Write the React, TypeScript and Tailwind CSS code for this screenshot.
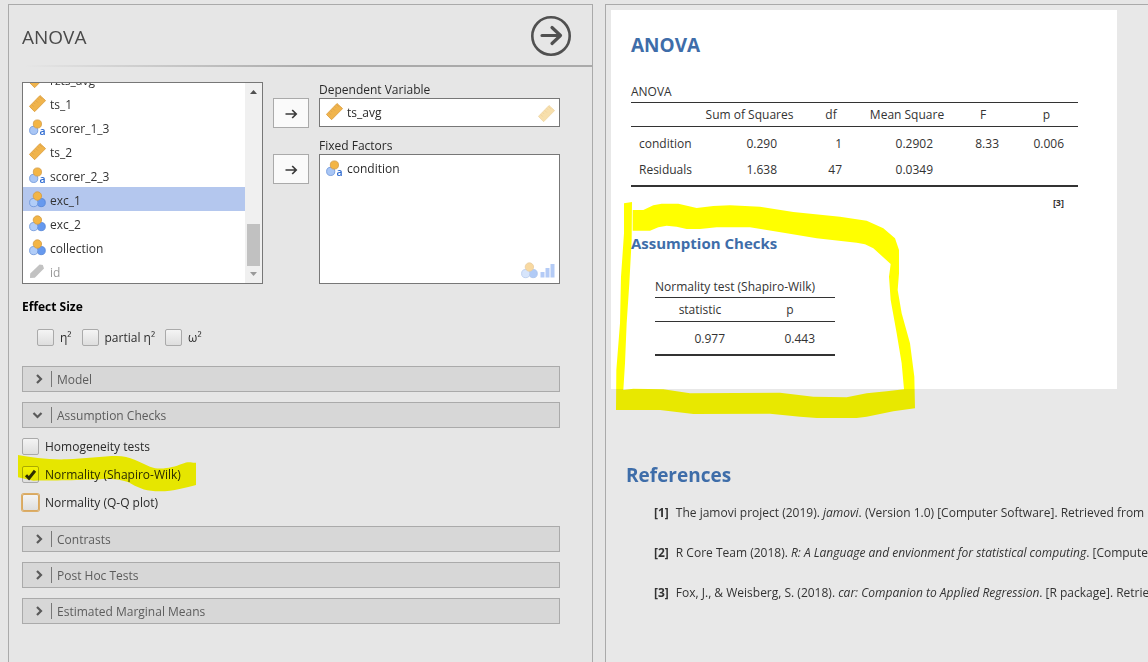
import { useId, useState } from 'react';
import type { ReactNode } from 'react';

type VarKind = 'continuous' | 'nominal' | 'nominalText' | 'id';

function RulerIcon({ muted = false }: { muted?: boolean }) {
  return (
    <svg viewBox="0 0 17 17" className="size-[17px] shrink-0" aria-hidden="true">
      <path
        d="M0.4 11.4 L11 0.5 L16.6 5.6 L5.6 16.7 Z"
        fill={muted ? '#f7dfac' : '#f0b44c'}
        stroke={muted ? '#efd6a4' : '#d99a3a'}
        strokeWidth="0.8"
      />
      <path
        d="M2.600 9.400l2.200 2.200M4.600 7.400l1.500 1.500M6.600 5.300l2.200 2.200M8.600 3.300l1.500 1.500M10.500 1.500l2.200 2.200"
        stroke={muted ? '#efd19a' : '#dca04a'}
        strokeWidth="0.8"
      />
    </svg>
  );
}

function NominalIcon({ muted = false }: { muted?: boolean }) {
  return (
    <svg viewBox="0 0 17 17" className={muted ? 'size-[17px] shrink-0 opacity-50' : 'size-[17px] shrink-0'} aria-hidden="true">
      <circle cx="12.2" cy="11.6" r="4.1" fill="#6699ee" stroke="#4f82d6" strokeWidth="0.8" />
      <circle cx="4.7" cy="11.6" r="4.1" fill="#b1cdf8" stroke="#6a93d8" strokeWidth="0.8" />
      <circle cx="8.4" cy="5" r="4.2" fill="#f3b545" stroke="#d29a45" strokeWidth="0.8" />
    </svg>
  );
}

function NominalTextIcon() {
  return (
    <svg viewBox="0 0 17 17" className="size-[17px] shrink-0 overflow-visible" aria-hidden="true">
      <circle cx="4.7" cy="11.4" r="4.1" fill="#a9c6f5" stroke="#6a93d8" strokeWidth="0.8" />
      <circle cx="8.4" cy="5" r="4.1" fill="#f3b545" stroke="#d29a45" strokeWidth="0.8" />
      <text x="10.6" y="15.6" fontSize="10.5" fontWeight="600" fill="#2f6bd0" fontFamily="Open Sans, sans-serif">
        a
      </text>
    </svg>
  );
}

function IdIcon() {
  return (
    <svg viewBox="0 0 17 17" className="size-[17px] shrink-0" aria-hidden="true">
      <path d="M1.200 10.400 L10.600 1.600 L13.800 2 L15 5.600 L5.800 14.800 L1 15 Z" fill="#c2c2c2" />
    </svg>
  );
}

function OrdinalIcon() {
  return (
    <svg viewBox="0 0 15 15" className="size-[15px] shrink-0" aria-hidden="true">
      <path d="M0.5 9h4v5.5h-4zM5.5 5h4v9.5h-4zM10.5 1h4v13.5h-4z" fill="#b4cbf6" />
    </svg>
  );
}

function VarIcon({ kind }: { kind: VarKind }) {
  if (kind === 'continuous') return <RulerIcon />;
  if (kind === 'nominal') return <NominalIcon />;
  if (kind === 'nominalText') return <NominalTextIcon />;
  return <IdIcon />;
}

const variables: { name: string; kind: VarKind }[] = [
  { name: 'rzts_avg', kind: 'continuous' },
  { name: 'ts_1', kind: 'continuous' },
  { name: 'scorer_1_3', kind: 'nominalText' },
  { name: 'ts_2', kind: 'continuous' },
  { name: 'scorer_2_3', kind: 'nominalText' },
  { name: 'exc_1', kind: 'nominal' },
  { name: 'exc_2', kind: 'nominal' },
  { name: 'collection', kind: 'nominal' },
  { name: 'id', kind: 'id' },
];

function VariableList() {
  const [selected, setSelected] = useState('exc_1');
  return (
    <div className="flex h-[202px] w-[241px] border border-[#777]">
      <ul role="listbox" aria-label="Variables" className="flex flex-1 flex-col justify-end overflow-hidden bg-white">
        {variables.map((v) => (
          <li
            key={v.name}
            role="option"
            aria-selected={v.name === selected}
            onClick={() => setSelected(v.name)}
            className={`flex h-6 shrink-0 items-center gap-1 pl-1.5 ${v.name === selected ? 'bg-[#b4c7ee]' : ''} ${
              v.kind === 'id' ? 'text-[#999]' : 'text-[#333]'
            }`}
          >
            <VarIcon kind={v.kind} />
            <span className="pt-1">{v.name}</span>
          </li>
        ))}
      </ul>
      <div className="flex w-[17px] flex-col items-center justify-between bg-[#f0f0f0]">
        <svg viewBox="0 0 17 17" className="size-[17px]" aria-hidden="true">
          <path d="M5 11h7L8.500 7z" fill="#505050" />
        </svg>
        <div className="flex flex-col items-center">
          <div className="h-[42px] w-[13px] bg-[#c1c1c1]" />
          <svg viewBox="0 0 17 17" className="size-[17px]" aria-hidden="true">
            <path d="M5 6h7L8.500 10z" fill="#9a9a9a" />
          </svg>
        </div>
      </div>
    </div>
  );
}

function AssignButton({ label }: { label: string }) {
  return (
    <button type="button" aria-label={label} className="flex h-[30px] w-9 items-center justify-center border border-[#aaa] bg-[#fafafa]">
      <svg viewBox="0 0 14 12" className="mt-0.5 h-3 w-3.5" fill="none" stroke="#3a3a3a" strokeWidth="1.7" aria-hidden="true">
        <path d="M1.500 6h10.500M8.200 2l4 4-4 4" />
      </svg>
    </button>
  );
}

function Check({ label, checked = false, focused = false }: { label: string; checked?: boolean; focused?: boolean }) {
  const id = useId();
  return (
    <div className="flex h-5 items-center gap-1.5">
      <span className="relative flex size-[17px]">
        <input
          id={id}
          type="checkbox"
          defaultChecked={checked}
          className={`peer size-[17px] appearance-none rounded-xs border bg-linear-to-b from-[#f4f4f4] to-[#dedede] ${
            focused ? 'border-[#d9a860] ring-1 ring-[#dcae68]' : 'border-[#aaa]'
          }`}
        />
        <svg viewBox="0 0 17 17" className="pointer-events-none absolute inset-0 hidden peer-checked:block" aria-hidden="true">
          <path d="M4 9.200l3 3.100L13 4.800" fill="none" stroke="#2e2e2e" strokeWidth="3" />
        </svg>
      </span>
      <label htmlFor={id} className="pt-0.5">
        {label}
      </label>
    </div>
  );
}

function Section({ title, open = false }: { title: string; open?: boolean }) {
  return (
    <button
      type="button"
      aria-expanded={open}
      className="flex h-[26px] w-full items-center border border-[#aaa] bg-[#d7d7d7] pl-2 text-left text-[#5c5c5c]"
    >
      <svg viewBox="0 0 16 16" className="size-4" fill="none" stroke="#5a5a5a" strokeWidth="2.2" aria-hidden="true">
        {open ? <path d="M2.500 6l4 4 4-4" /> : <path d="M6 4l4 4-4 4" />}
      </svg>
      <span className="mr-[5px] ml-1 h-4 w-px bg-[#777]" />
      <span className="pt-0.5">{title}</span>
    </button>
  );
}

function OptionsPanel() {
  return (
    <section className="w-[585px] shrink-0 border border-b-0 border-[#aaa]">
      <header className="flex h-[60px] items-center justify-between pt-0.5 pr-[21px] pl-[13px]">
        <h1 className="pt-0.5 text-[19px] text-[#4a4a4a]">ANOVA</h1>
        <button type="button" aria-label="Close options" className="size-10">
          <svg viewBox="0 0 40 40" className="size-10" fill="none" stroke="#505050" aria-hidden="true">
            <circle cx="20" cy="20" r="18.700" strokeWidth="2.600" />
            <path d="M11 19.500h18M21 11.500l8.500 8-8.500 8" strokeWidth="3.200" strokeLinecap="round" strokeLinejoin="round" />
          </svg>
        </button>
      </header>
      <div className="ml-4 h-0.5 bg-linear-to-r from-[#e6e6e6] to-[#aaa] to-50%" />

      <div className="pt-[15px] pr-8 pl-[13px]">
        <div className="flex gap-2.5">
          <VariableList />
          <div className="flex flex-col gap-[26px] pt-4">
            <AssignButton label="Move to Dependent Variable" />
            <AssignButton label="Move to Fixed Factors" />
          </div>
          <div className="flex flex-1 flex-col">
            <h2 className="h-4 leading-4">Dependent Variable</h2>
            <div className="flex h-[29px] items-center gap-1 border border-[#777] bg-white pr-1 pb-0.5 pl-1.5">
              <RulerIcon />
              <span className="flex-1 pt-0.5">ts_avg</span>
              <span className="pt-1">
                <RulerIcon muted />
              </span>
            </div>
            <h2 className="mt-[11px] h-4 leading-4">Fixed Factors</h2>
            <div className="flex flex-1 flex-col justify-between border border-[#777] bg-white pr-1 pb-1 pl-1.5">
              <div className="flex h-6 items-center gap-1 pt-0.5">
                <NominalTextIcon />
                <span className="pt-0.5">condition</span>
              </div>
              <div className="flex items-center justify-end gap-0.5">
                <NominalIcon muted />
                <OrdinalIcon />
              </div>
            </div>
          </div>
        </div>

        <h2 className="mt-[13px] font-bold text-black">Effect Size</h2>
        <div className="mt-2.5 flex gap-2.5 pl-[15px]">
          <Check label="η²" />
          <Check label="partial η²" />
          <Check label="ω²" />
        </div>

        <div className="mt-[19px] flex flex-col gap-2.5">
          <Section title="Model" />
          <div>
            <Section title="Assumption Checks" open />
            <div className="mt-1">
              <div className="flex h-7 items-center">
                <Check label="Homogeneity tests" />
              </div>
              <div className="relative flex h-7 items-center">
                <Check label="Normality (Shapiro-Wilk)" checked />
                <svg
                  viewBox="54 72 540 120"
                  className="pointer-events-none absolute -top-1.5 -left-1 h-10 w-[180px] mix-blend-multiply"
                  aria-hidden="true"
                >
                  <path
                    d="M54 75C90 82 150 90 200 88S310 78 350 78S420 98 450 110S520 112 545 102S575 100 588 98V165C560 172 520 184 480 184S420 176 395 162S330 146 300 148S170 152 100 152L54 142Z"
                    fill="#ff0"
                  />
                </svg>
              </div>
              <div className="flex h-7 items-center">
                <Check label="Normality (Q-Q plot)" focused />
              </div>
            </div>
          </div>
          <Section title="Contrasts" />
          <Section title="Post Hoc Tests" />
          <Section title="Estimated Marginal Means" />
        </div>
      </div>
    </section>
  );
}

function AnovaTable() {
  return (
    <table className="mt-[25px] w-[447px] table-fixed border-collapse">
      <caption className="h-5 text-left leading-5">ANOVA</caption>
      <colgroup>
        <col className="w-[65px]" />
        <col className="w-[107px]" />
        <col className="w-14" />
        <col className="w-24" />
        <col className="w-14" />
        <col className="w-[67px]" />
      </colgroup>
      <thead>
        <tr className="h-6 border-y border-[#333]">
          <td />
          <th className="font-normal whitespace-nowrap">Sum of Squares</th>
          <th className="font-normal">df</th>
          <th className="font-normal whitespace-nowrap">Mean Square</th>
          <th className="font-normal">F</th>
          <th className="pl-1 font-normal">p</th>
        </tr>
      </thead>
      <tbody className="border-b-2 border-[#333] text-right">
        <tr className="h-[31px]">
          <th className="pt-1 pl-2 text-left font-normal">condition</th>
          <td className="pt-1 pr-[26px]">0.290</td>
          <td className="pt-1 pr-[17px]">1</td>
          <td className="pt-1 pr-[22px]">0.2902</td>
          <td className="pt-1 pr-3">8.33</td>
          <td className="pt-1 pr-3.5">0.006</td>
        </tr>
        <tr className="h-7">
          <th className="pb-0.5 pl-2 text-left font-normal">Residuals</th>
          <td className="pr-[26px] pb-0.5">1.638</td>
          <td className="pr-[17px] pb-0.5">47</td>
          <td className="pr-[22px] pb-0.5">0.0349</td>
          <td />
          <td />
        </tr>
      </tbody>
    </table>
  );
}

function NormalityTable() {
  return (
    <table className="mt-[22px] ml-6 w-[180px] table-fixed border-collapse">
      <caption className="h-5 text-left leading-5 whitespace-nowrap">Normality test (Shapiro-Wilk)</caption>
      <thead>
        <tr className="h-6 border-y border-[#333]">
          <th className="pt-0.5 font-normal">statistic</th>
          <th className="pt-0.5 font-normal">p</th>
        </tr>
      </thead>
      <tbody className="border-b-2 border-[#333] text-right">
        <tr className="h-[34px]">
          <td className="pt-0.5 pr-5">0.977</td>
          <td className="pt-0.5 pr-5">0.443</td>
        </tr>
      </tbody>
    </table>
  );
}

function Reference({ n, children }: { n: number; children: ReactNode }) {
  return (
    <li className="flex h-5 items-center gap-[7px] whitespace-nowrap">
      <b>[{n}]</b>
      <span>{children}</span>
    </li>
  );
}

function ResultsPanel() {
  return (
    <section className="min-w-0 flex-1 overflow-hidden border-t border-l border-[#aaa] bg-[#e8e8e8] pt-[5px] pl-[5px] text-[#333]">
      <article className="relative h-[379px] w-[506px] bg-white pt-[23px] pl-5">
        <h2 className="text-[19px] leading-6 font-bold text-[#3e6da9]">ANOVA</h2>
        <AnovaTable />
        <p className="mt-2 w-[433px] text-right text-[9px] leading-4 font-bold">[3]</p>
        <h3 className="mt-5 text-[15px] leading-6 font-bold text-[#3e6da9]">Assumption Checks</h3>
        <NormalityTable />
        <svg
          viewBox="33 0 1020 720"
          className="pointer-events-none absolute top-[180px] left-0 h-[240px] w-[340px] mix-blend-multiply"
          aria-hidden="true"
        >
          <path
            d="M72 40L96 36L95 150L88 280L80 400L75 520L70 600L100 596L190 598L270 610L540 608L640 620L740 622L800 610L860 604L912 598L905 520L890 430L872 330L867 260L872 222L820 175L795 163L770 158L650 145L560 130L450 112L350 112L300 117L260 117L230 110L200 107L175 112L150 122L98 122L98 60L130 60L160 46L185 41L235 41L290 54L340 48L390 46L480 50L580 66L720 80L800 92L850 115L885 145L897 180L897 250L893 300L905 370L930 460L943 560L945 655L880 664L800 680L770 684L650 684L600 680L510 671L280 672L180 660L48 660L49 540L60 400L63 260L72 130Z"
            fill="#ff0"
          />
        </svg>
      </article>
      <div className="pt-[72px] pl-[15px]">
        <h2 className="text-[19px] leading-7 font-bold text-[#3e6da9]">References</h2>
        <ul className="mt-3.5 flex flex-col gap-5 pl-7">
          <Reference n={1}>
            The jamovi project (2019). <i>jamovi</i>. (Version 1.0) [Computer Software]. Retrieved from
          </Reference>
          <Reference n={2}>
            R Core Team (2018). <i>R: A Language and envionment for statistical computing</i>. [Computer
          </Reference>
          <Reference n={3}>
            Fox, J., &amp; Weisberg, S. (2018). <i>car: Companion to Applied Regression</i>. [R package]. Retrieved
          </Reference>
        </ul>
      </div>
    </section>
  );
}

export default function App() {
  return (
    <main className="flex min-h-screen gap-3 bg-[#e6e6e6] pt-1 pl-2 font-['Open_Sans','Noto_Sans',sans-serif] text-xs leading-5 text-[#2a2a2a]">
      <OptionsPanel />
      <ResultsPanel />
    </main>
  );
}
